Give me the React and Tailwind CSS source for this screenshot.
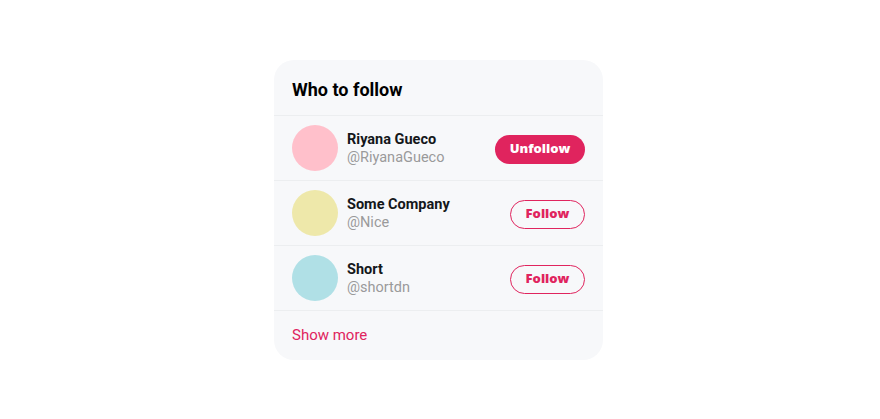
const people = [
  { name: 'Riyana Gueco', handle: '@RiyanaGueco', color: 'bg-[#ffc0cb]', following: true },
  { name: 'Some Company', handle: '@Nice', color: 'bg-[#eee8aa]', following: false },
  { name: 'Short', handle: '@shortdn', color: 'bg-[#b0e0e6]', following: false },
]

export default function App() {
  return (
    <div className="w-[880px] h-[419px] bg-white pt-[60px] pl-[274px] font-['Roboto',sans-serif]">
      <div className="w-[329px] rounded-[20px] bg-[#f7f8fa] overflow-hidden">
        <div className="h-[56px] px-[18px] flex items-center border-b border-[#eceef0]">
          <h2 className="text-[18px] font-bold text-black pt-[4px]">Who to follow</h2>
        </div>
        {people.map(p => (
          <div key={p.handle} className="h-[65px] px-[18px] flex items-center border-b border-[#eceef0]">
            <div className={`w-[46px] h-[46px] rounded-full ${p.color}`} />
            <div className="ml-[9px] flex-1 leading-[18px] pt-[2px]">
              <div className="text-[14.5px] font-bold text-[#14171a]">{p.name}</div>
              <div className="text-[14.5px] text-[#9a9a9a]">{p.handle}</div>
            </div>
            {p.following ? (
              <button className="w-[90px] h-[29px] mt-[2px] rounded-full bg-[#e0245e] text-white text-[13px] font-extrabold font-['Open_Sans',sans-serif]">
                Unfollow
              </button>
            ) : (
              <button className="w-[75px] h-[29px] mt-[2px] rounded-full border border-[#e0245e] text-[#e0245e] text-[13px] font-extrabold font-['Open_Sans',sans-serif]">
                Follow
              </button>
            )}
          </div>
        ))}
        <div className="h-[49px] px-[18px] flex items-center">
          <span className="text-[15px] text-[#e0245e]">Show more</span>
        </div>
      </div>
    </div>
  )
}
